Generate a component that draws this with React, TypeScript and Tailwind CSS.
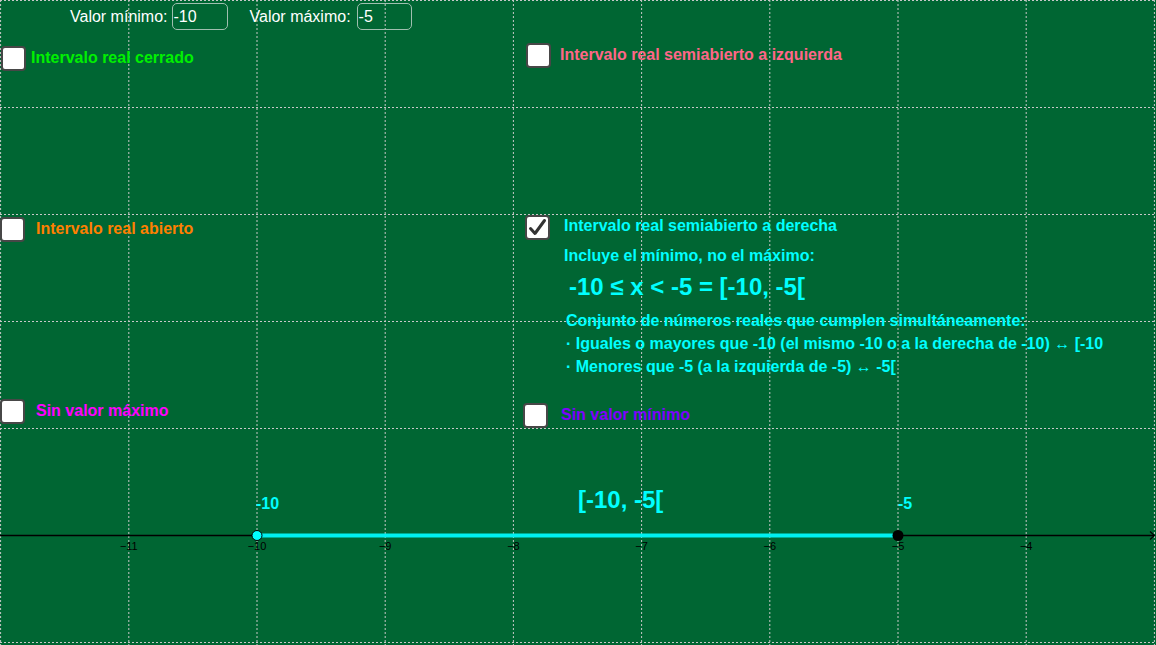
import React from 'react'

const unit = 128.2
const originX = 257 + 10 * unit // x of 0
const axisY = 535.5

const xOf = (v: number) => originX + v * unit

const vLines = Array.from({ length: 10 }, (_, i) => 257 + (i - 2) * unit)
const hLines = [0.5, 107.5, 214.5, 321.5, 428.5, 642.5]
const ticks = [-11, -10, -9, -8, -7, -6, -5, -4]

function Checkbox({ checked = false }: { checked?: boolean }) {
  return (
    <div className="w-[25px] h-[25px] shrink-0 rounded-[4px] border-2 border-[#474747] bg-white flex items-center justify-center">
      {checked && (
        <svg width="19" height="19" viewBox="0 0 19 19">
          <path d="M2.5 10.5 L7 15.5 L16.5 2.5" fill="none" stroke="#333" strokeWidth="3" strokeLinecap="round" strokeLinejoin="round" />
        </svg>
      )}
    </div>
  )
}

// a GeoGebra check box: its place on the canvas is part of the applet
function Option({ left, top, gap, color, text }: {
  left: number
  top: number
  gap: number
  color: string
  text: string
}) {
  return (
    <div className="absolute flex items-center" style={{ left, top, gap }}>
      <Checkbox />
      <span className="pb-[1px] text-[16px] font-bold leading-[16px] whitespace-nowrap" style={{ color }}>
        {text}
      </span>
    </div>
  )
}

function ValueInput({ value, width }: { value: string; width: string }) {
  return (
    <div className={`${width} h-[27px] rounded-[5px] border border-[#9fbfaf] pl-[1px] flex items-center text-[16px] text-white`}>
      {value}
    </div>
  )
}

function Graph() {
  return (
    <svg className="absolute inset-0" width="1156" height="645">
      {/* grid */}
      {vLines.map((x, i) => (
        <line key={'v' + i} x1={x} y1={0} x2={x} y2={645} stroke="#c8c8c8" strokeWidth="1" strokeDasharray="2 2" />
      ))}
      {hLines.map((y, i) => (
        <line key={'h' + i} x1={0} y1={y} x2={1156} y2={y} stroke="#c8c8c8" strokeWidth="1" strokeDasharray="2 2" />
      ))}

      {/* axis */}
      <line x1={0} y1={axisY} x2={1154} y2={axisY} stroke="#000" strokeWidth="1.3" />
      <path d="M1150 531.5 L1154.5 535.5 L1150 539.5" fill="none" stroke="#000" strokeWidth="1.2" />

      {ticks.map((t) => (
        <text key={t} x={xOf(t)} y={549.5} fontSize="11" fontFamily="'Liberation Sans', Arial, sans-serif" textAnchor="middle" fill="#000">
          {'\u2212' + Math.abs(t)}
        </text>
      ))}

      {/* interval [-10, -5[ */}
      <line x1={xOf(-10)} y1={axisY} x2={xOf(-5)} y2={axisY} stroke="#00f0f0" strokeWidth="4" />
      <circle cx={xOf(-10)} cy={axisY} r="5" fill="#00ffff" stroke="#000" strokeWidth="1" />
      <circle cx={xOf(-5)} cy={axisY} r="5.5" fill="#000" />
    </svg>
  )
}

export default function App() {
  return (
    <div className="relative w-[1156px] h-[645px] overflow-hidden bg-[#006633] font-['Liberation_Sans',Arial,sans-serif]">
      <Graph />

      {/* top inputs */}
      <div className="absolute left-[70px] top-[3px] flex items-center text-[16px] text-white whitespace-nowrap">
        <span className="mr-[4px]">Valor mínimo:</span>
        <ValueInput value="-10" width="w-[56px]" />
        <span className="ml-[22px] mr-[6px]">Valor máximo:</span>
        <ValueInput value="-5" width="w-[55px]" />
      </div>

      <Option left={1} top={46} gap={5} color="#00f000" text="Intervalo real cerrado" />
      <Option left={526} top={43} gap={9} color="#ff6688" text="Intervalo real semiabierto a izquierda" />
      <Option left={0} top={217} gap={11} color="#ff8000" text="Intervalo real abierto" />
      <Option left={0} top={399} gap={11} color="#ff00ff" text="Sin valor máximo" />
      <Option left={523} top={403} gap={13} color="#7f00ff" text="Sin valor mínimo" />

      {/* checked option with its explanation */}
      <div className="absolute left-[525px] top-[215px] flex flex-col text-[#00ffff] font-bold whitespace-nowrap">
        <div className="flex items-center gap-[14px]">
          <Checkbox checked />
          <span className="pb-[3px] text-[16px] leading-[16px]">Intervalo real semiabierto a derecha</span>
        </div>
        <div className="ml-[39px] mt-[8px] text-[16px] leading-[16px]">Incluye el mínimo, no el máximo:</div>
        <div className="ml-[44px] mt-[11px] text-[24px] leading-[24px]">-10 ≤ x &lt; -5 = [-10, -5[</div>
        <div className="ml-[41px] mt-[14px] flex flex-col gap-[7px] text-[16px] leading-[16px]">
          <span>Conjunto de números reales que cumplen simultáneamente:</span>
          <span>· Iguales o mayores que -10 (el mismo -10 o a la derecha de -10) ↔ [-10</span>
          <span>· Menores que -5 (a la izquierda de -5) ↔ -5[</span>
        </div>
      </div>

      {/* point labels on the graph */}
      <div className="absolute left-[256px] top-[496px] text-[16px] leading-[16px] font-bold text-[#00ffff]">-10</div>
      <div className="absolute left-[578px] top-[488px] text-[24px] leading-[24px] font-bold text-[#00ffff] whitespace-nowrap">[-10, -5[</div>
      <div className="absolute left-[898px] top-[496px] text-[16px] leading-[16px] font-bold text-[#00ffff]">-5</div>
    </div>
  )
}
